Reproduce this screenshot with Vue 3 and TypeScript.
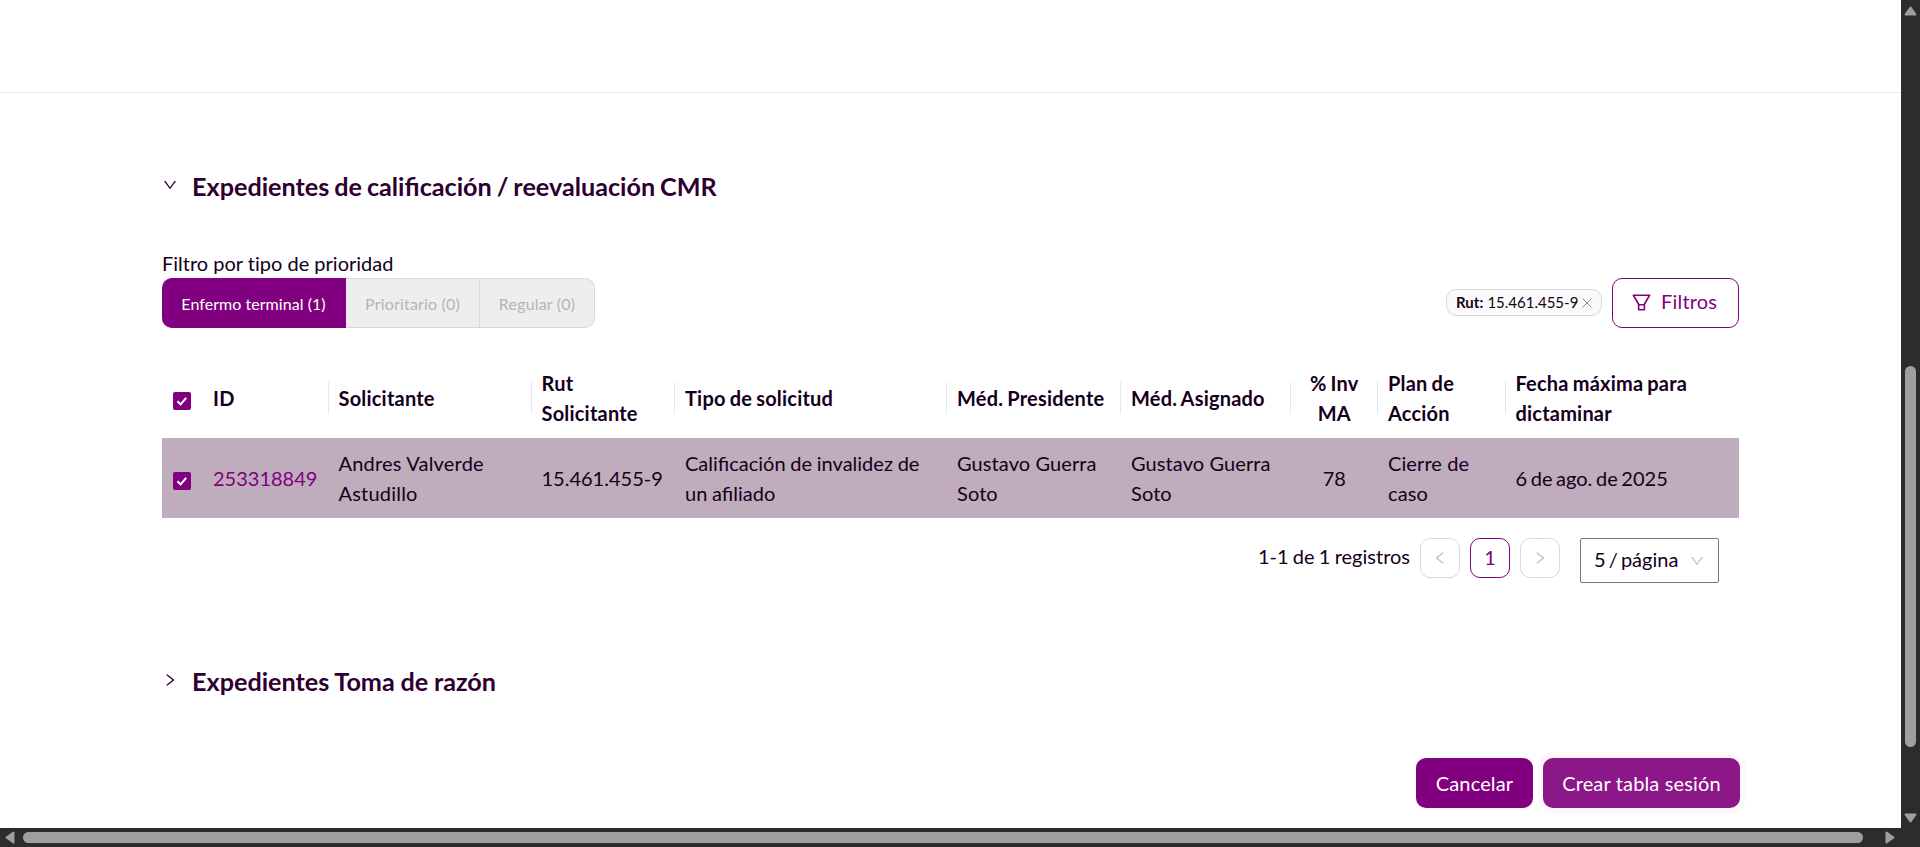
<script setup lang="ts">
interface Column {
  key: string
  lines: string[]
  center?: boolean
}

const downPath =
  'M884 256h-75c-5.1 0-9.9 2.5-12.9 6.6L512 654.2 227.9 262.6c-3-4.1-7.8-6.6-12.9-6.6h-75c-6.5 0-10.3 7.4-6.5 12.7l352.6 486.1c12.8 17.6 39 17.6 51.7 0l352.6-486.1c3.9-5.3.1-12.7-6.4-12.7z'
const rightPath =
  'M765.7 486.8L314.9 134.7A7.97 7.97 0 00302 141v77.3c0 4.9 2.3 9.6 6.1 12.6l360 281.1-360 281.1c-3.9 3-6.1 7.7-6.1 12.6V883c0 6.7 7.7 10.4 12.9 6.3l450.8-352.1a31.96 31.96 0 000-50.4z'
const leftPath =
  'M724 218.3V141c0-6.7-7.7-10.4-12.9-6.3L260.3 486.8a31.86 31.86 0 000 50.3l450.8 352.1c5.3 4.1 12.9.4 12.9-6.3v-77.3c0-4.9-2.3-9.6-6.1-12.6l-360-281 360-281.1c3.8-3 6.1-7.7 6.1-12.6z'
const filterPath =
  'M880.1 154H143.9c-24.5 0-39.8 26.7-27.5 48L349 597.4V838c0 17.7 14.2 32 31.8 32h262.4c17.6 0 31.8-14.3 31.8-32V597.4L907.7 202c12.2-21.3-3.1-48-27.6-48zM603.4 798H420.6V642h182.9v156zm9.6-236.6l-9.5 16.6h-183l-9.5-16.6L212.7 226h598.6L613 561.4z'

const columns: Column[] = [
  { key: 'id', lines: ['ID'] },
  { key: 'applicant', lines: ['Solicitante'] },
  { key: 'rut', lines: ['Rut', 'Solicitante'] },
  { key: 'type', lines: ['Tipo de solicitud'] },
  { key: 'president', lines: ['Méd. Presidente'] },
  { key: 'assigned', lines: ['Méd. Asignado'] },
  { key: 'inv', lines: ['% Inv', 'MA'], center: true },
  { key: 'plan', lines: ['Plan de', 'Acción'] },
  { key: 'date', lines: ['Fecha máxima para', 'dictaminar'] },
]

const row: Record<string, string[]> = {
  id: ['253318849'],
  applicant: ['Andres Valverde', 'Astudillo'],
  rut: ['15.461.455-9'],
  type: ['Calificación de invalidez de', 'un afiliado'],
  president: ['Gustavo Guerra', 'Soto'],
  assigned: ['Gustavo Guerra', 'Soto'],
  inv: ['78'],
  plan: ['Cierre de', 'caso'],
  date: ['6 de ago. de 2025'],
}
</script>

<template>
  <div class="window">
    <main class="page">
      <div class="topbar"></div>
      <div class="content">
        <h2 class="section-title">
          <svg class="caret" viewBox="0 0 1024 1024"><path :d="downPath" /></svg>
          <span>Expedientes de calificación / reevaluación CMR</span>
        </h2>

        <div class="label">Filtro por tipo de prioridad</div>
        <div class="toolbar">
          <div class="tabs">
            <button class="tab active">Enfermo terminal (1)</button>
            <button class="tab">Prioritario (0)</button>
            <button class="tab">Regular (0)</button>
          </div>
          <div class="filters">
            <span class="tag">
              <span><b>Rut:</b> 15.461.455-9</span>
              <svg class="close" viewBox="0 0 10 10"><path d="M.6.6l8.8 8.8M9.4.6L.6 9.4" /></svg>
            </span>
            <button class="filter-btn">
              <svg viewBox="0 0 1024 1024"><path :d="filterPath" /></svg>
              <span>Filtros</span>
            </button>
          </div>
        </div>

        <div class="table">
          <div class="tr head">
            <div class="check-cell">
              <span class="checkbox"><svg viewBox="0 0 18 18"><path d="M4.5 9.3l3.1 3.1 5.6-6.6" /></svg></span>
            </div>
            <div v-for="c in columns" :key="c.key" class="cell" :class="[c.key, { center: c.center }]">
              <div v-for="l in c.lines" :key="l">{{ l }}</div>
            </div>
          </div>
          <div class="tr body">
            <div class="check-cell">
              <span class="checkbox"><svg viewBox="0 0 18 18"><path d="M4.5 9.3l3.1 3.1 5.6-6.6" /></svg></span>
            </div>
            <div v-for="c in columns" :key="c.key" class="cell" :class="[c.key, { center: c.center }]">
              <div v-for="l in row[c.key]" :key="l">{{ l }}</div>
            </div>
          </div>
        </div>

        <div class="pagination">
          <span class="total">1-1 de 1 registros</span>
          <span class="pg"><svg viewBox="0 0 1024 1024"><path :d="leftPath" /></svg></span>
          <span class="pg current">1</span>
          <span class="pg"><svg viewBox="0 0 1024 1024"><path :d="rightPath" /></svg></span>
          <span class="size">
            <span>5 / página</span>
            <svg viewBox="0 0 1024 1024"><path :d="downPath" /></svg>
          </span>
        </div>

        <h2 class="section-title second">
          <svg class="caret" viewBox="0 0 1024 1024"><path :d="rightPath" /></svg>
          <span>Expedientes Toma de razón</span>
        </h2>

        <div class="actions">
          <button class="primary">Cancelar</button>
          <button class="primary focused">Crear tabla sesión</button>
        </div>
      </div>
    </main>

    <div class="vbar">
      <svg class="arrow-v" viewBox="0 0 13 10"><path d="M6.5 1.5L11.5 8.5H1.5Z" /></svg>
      <div class="thumb-v"></div>
      <svg class="arrow-v down" viewBox="0 0 13 10"><path d="M6.5 8.5L11.5 1.5H1.5Z" /></svg>
    </div>
    <div class="hbar">
      <svg class="arrow-h" viewBox="0 0 10 13"><path d="M1.5 6.5L8.5 1.5V11.5Z" /></svg>
      <div class="thumb-h"></div>
      <svg class="arrow-h right" viewBox="0 0 10 13"><path d="M8.5 6.5L1.5 1.5V11.5Z" /></svg>
    </div>
  </div>
</template>

<style>
body {
  margin: 0;
  overflow: hidden;
}
</style>

<style scoped>
* {
  box-sizing: border-box;
}
.window {
  display: grid;
  grid-template-columns: 1901px 19px;
  grid-template-rows: 828px 19px;
  width: 1920px;
  height: 847px;
  background: #2c2c2c;
  font-family: Lato, "Liberation Sans", sans-serif;
  font-size: 20px;
  line-height: 30px;
  color: #14001a;
}
.page {
  background: #fff;
  overflow: hidden;
}
svg {
  display: block;
  fill: currentColor;
  flex: none;
}
button {
  font-family: inherit;
  margin: 0;
  padding: 0;
}
.topbar {
  height: 93px;
  border-bottom: 1px solid #ececec;
}
.content {
  width: 1577px;
  margin-left: 162px;
}
.section-title {
  display: flex;
  align-items: center;
  height: 40px;
  margin: 73px 0 0;
  font-size: 25.2px;
  line-height: 40px;
  font-weight: 700;
  color: #2d0030;
  white-space: nowrap;
  word-spacing: -1.2px;
}
.caret {
  width: 16px;
  height: 16px;
  margin: 0 14.5px 2px -0.5px;
}
.label {
  margin-top: 42px;
  height: 30px;
  font-variant-ligatures: none;
}
.toolbar {
  display: flex;
  justify-content: space-between;
  align-items: center;
  height: 50px;
}
.tabs {
  display: flex;
  height: 50px;
}
.tab {
  width: 115px;
  border: 1px solid #d9d9d9;
  border-left: 0;
  background: #eee;
  color: #b5b5b5;
  font-size: 16px;
  padding-top: 1px;
  letter-spacing: 0.18px;
  white-space: nowrap;
}
.tab:nth-child(2) {
  width: 134px;
}
.tab:last-child {
  border-radius: 0 10px 10px 0;
}
.tab.active {
  width: 184px;
  background: #800080;
  border-color: #800080;
  color: #fff;
  letter-spacing: 0.05px;
  border-radius: 10px 0 0 10px;
}
.filters {
  display: flex;
  align-items: center;
  gap: 10px;
}
.tag {
  display: flex;
  align-items: center;
  justify-content: space-between;
  width: 156px;
  height: 27px;
  margin-bottom: 1px;
  padding: 0 9px;
  border: 1px solid #d9d9d9;
  border-radius: 10px;
  background: #fafafa;
  font-size: 15px;
  line-height: 25px;
  white-space: nowrap;
}
.tag span {
  margin-top: -1px;
  word-spacing: 0.3px;
}
.close {
  width: 10px;
  height: 10px;
  stroke: #8c8c8c;
  stroke-width: 1;
  fill: none;
}
.filter-btn {
  display: flex;
  align-items: center;
  gap: 8px;
  width: 127px;
  height: 50px;
  padding-left: 17px;
  border: 1px solid #800080;
  border-radius: 10px;
  background: #fff;
  color: #800080;
  font-size: 20px;
  line-height: 30px;
}
.filter-btn svg {
  width: 23px;
  height: 23px;
  margin-bottom: 2px;
}
.filter-btn span {
  margin-bottom: 4px;
  letter-spacing: 0.2px;
}
.table {
  margin-top: 30px;
}
.tr {
  display: grid;
  grid-template-columns: 40px 126.5px 203px 143.5px 272px 174px 169.5px 87.5px 127.5px 233.5px;
  align-items: center;
  height: 80px;
}
.tr.body {
  background: #bfacbc;
}
.check-cell {
  padding: 5px 0 0 11px;
}
.checkbox {
  display: block;
  width: 18px;
  height: 18px;
  border-radius: 2px;
  background: #800080;
}
.checkbox svg {
  width: 18px;
  height: 18px;
  fill: none;
  stroke: #fff;
  stroke-width: 2;
}
.cell {
  position: relative;
  padding: 0 10px;
  white-space: nowrap;
}
.head .cell {
  font-weight: 700;
  letter-spacing: 0.2px;
  word-spacing: -1px;
}
.head .cell:not(:last-child)::after {
  content: "";
  position: absolute;
  right: 0;
  top: 50%;
  width: 1px;
  height: 32px;
  margin-top: -16px;
  background: #e8e8e8;
}
.center {
  text-align: center;
}
.cell.id {
  padding-left: 11px;
}
.body .id {
  color: #800080;
}
.body .applicant {
  letter-spacing: 0.2px;
}
.body .type {
  word-spacing: -0.4px;
}
.body .president,
.body .assigned,
.body .plan {
  letter-spacing: 0.1px;
}
.body .date {
  word-spacing: -1.5px;
}
.pagination {
  display: flex;
  justify-content: flex-end;
  margin: 20px 20px 0 0;
  height: 45px;
}
.total {
  height: 40px;
  line-height: 37px;
  word-spacing: -0.9px;
}
.pg {
  display: flex;
  align-items: center;
  justify-content: center;
  width: 40px;
  height: 40px;
  margin-left: 10px;
  padding-bottom: 1px;
  border: 1px solid #d9d9d9;
  border-radius: 10px;
  color: #bfbfbf;
}
.pg svg {
  width: 16px;
  height: 16px;
}
.pg.current {
  padding-bottom: 2px;
  border-color: #800080;
  color: #800080;
}
.size {
  display: flex;
  align-items: center;
  justify-content: space-between;
  width: 139px;
  height: 45px;
  margin-left: 20px;
  padding: 0 13px;
  border: 1px solid #777;
  border-radius: 2px;
}
.size span {
  margin-bottom: 3px;
  word-spacing: -2px;
}
.size svg {
  width: 16px;
  height: 16px;
  color: #bfbfbf;
}
.section-title.second {
  margin-top: 78px;
  word-spacing: -0.4px;
}
.actions {
  display: flex;
  justify-content: flex-end;
  gap: 10px;
  margin: 57px -1px 0 0;
}
.primary {
  width: 117px;
  height: 50px;
  border: 0;
  border-radius: 10px;
  background: #800080;
  color: #fff;
  font-size: 20px;
  line-height: 30px;
  letter-spacing: 0.15px;
  box-shadow: 0 2px 0 rgba(128, 0, 128, 0.03);
}
.primary.focused {
  width: 197px;
  background: #8c1788;
  box-shadow: 0 0 0 6px #fcf8fc, 0 2px 0 rgba(128, 0, 128, 0.03);
}
.vbar {
  display: flex;
  flex-direction: column;
  align-items: center;
  grid-row: 1;
  grid-column: 2;
  padding-top: 6px;
}
.arrow-v,
.arrow-h {
  fill: #9f9f9f;
  stroke: #9f9f9f;
  stroke-width: 2;
  stroke-linejoin: round;
}
.arrow-v {
  width: 13px;
  height: 10px;
}
.thumb-v {
  width: 11px;
  height: 381px;
  margin: 350px 0 66px;
  border-radius: 6px;
  background: #9f9f9f;
  flex: none;
}
.hbar {
  display: flex;
  align-items: center;
  grid-row: 2;
  grid-column: 1 / 3;
  padding-left: 5px;
}
.arrow-h {
  width: 10px;
  height: 13px;
}
.thumb-h {
  width: 1840px;
  height: 11px;
  margin: 0 22px 0 8px;
  border-radius: 6px;
  background: #9f9f9f;
  flex: none;
}
</style>
